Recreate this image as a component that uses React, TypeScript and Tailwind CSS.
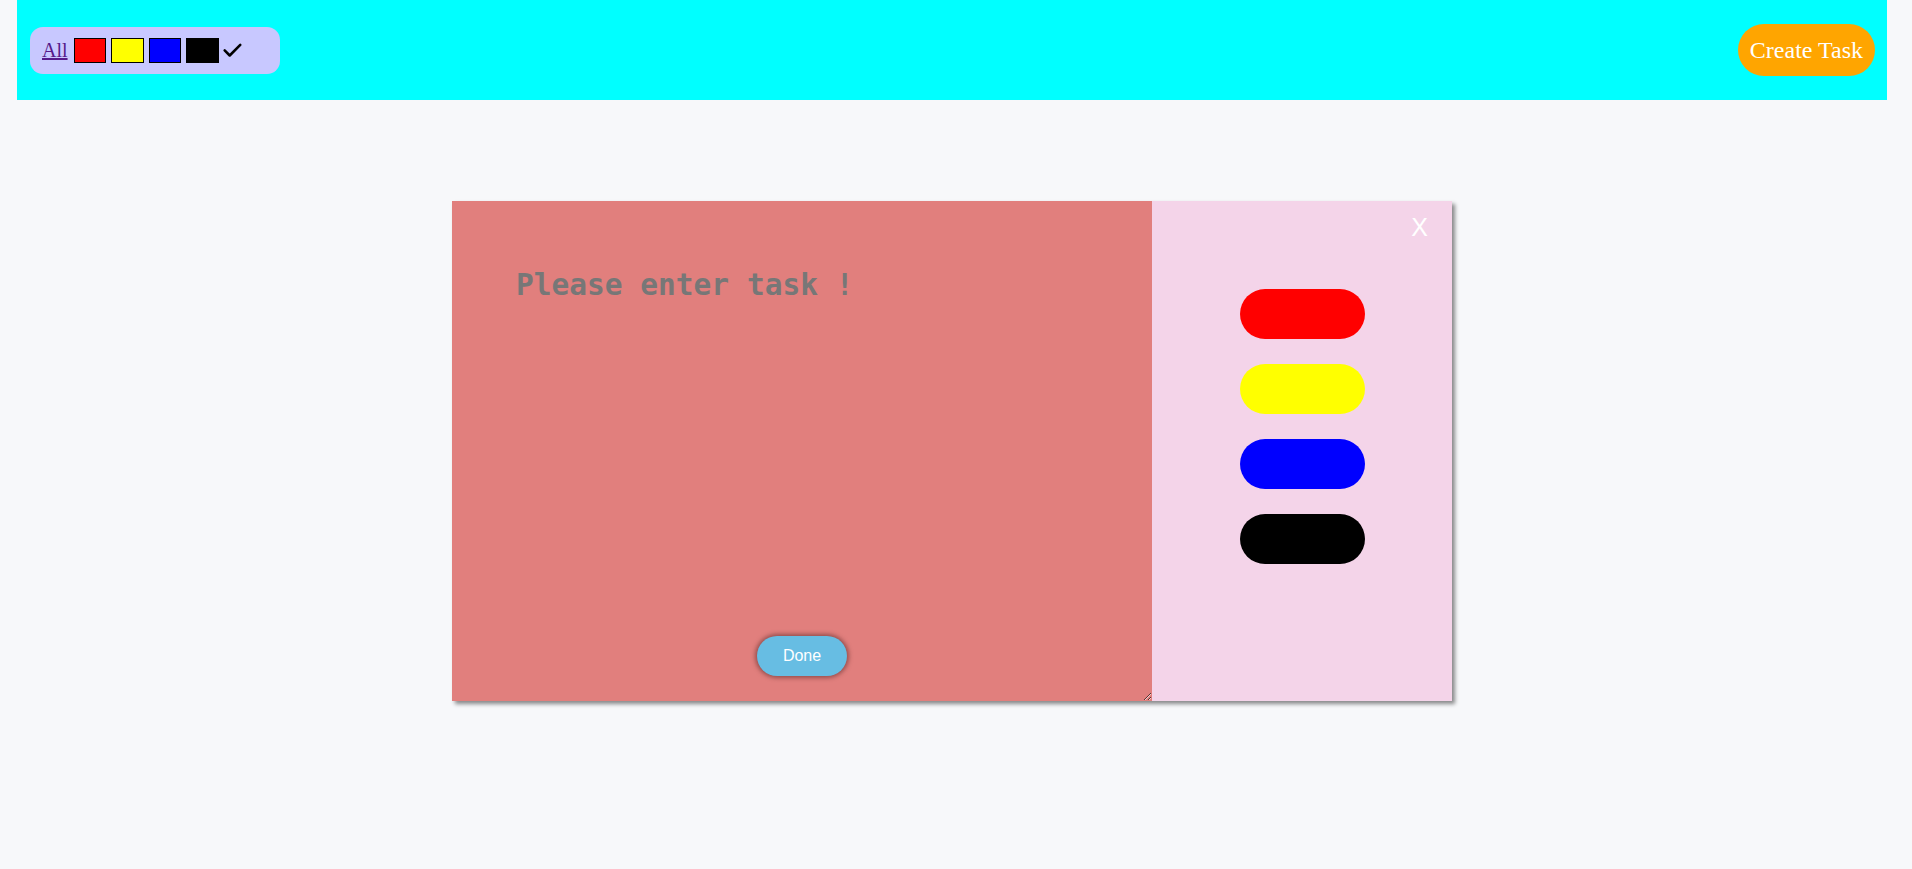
import React from "react";

export default function App() {
  return (
    <div className="min-h-[869px] w-full bg-[#f7f8fa]">
      <div className="pl-[17px]">
        <div className="flex h-[100px] w-[1870px] items-center justify-between bg-[#00ffff] pl-[13px] pr-[12px]">
          <div className="flex h-[47px] w-[250px] items-center gap-[5px] rounded-[13px] bg-[#c8c8ff] pl-[12px]">
            <a href="#" className="mr-[1px] text-[20px] leading-none text-[#551a8b] underline" style={{ fontFamily: '"Liberation Serif", serif' }}>
              All
            </a>
            <span className="h-[25px] w-[32px] border border-black bg-[#ff0000]" />
            <span className="h-[25px] w-[33px] border border-black bg-[#ffff00]" />
            <span className="h-[25px] w-[32px] border border-black bg-[#0000ff]" />
            <span className="h-[25px] w-[33px] border border-black bg-black" />
            <svg width="22" height="22" viewBox="0 0 24 24" fill="none" stroke="black" strokeWidth="2.8" strokeLinecap="round" strokeLinejoin="round" className="-ml-[3px]">
              <path d="M4 12.5l5.5 5.5L21 6.5" />
            </svg>
          </div>
          <button
            className="h-[52px] rounded-[26px] bg-[#ffa500] px-[12px] text-[24px] leading-none text-white"
            style={{ fontFamily: '"Liberation Serif", serif' }}
          >
            Create Task
          </button>
        </div>
      </div>
      <div className="ml-[452px] mt-[101px] flex h-[500px] w-[1000px] shadow-[3px_3px_4px_rgba(0,0,0,0.45)]">
        <div className="relative h-[500px] w-[700px] bg-[#e17f7d]">
          <textarea
            placeholder="Please enter task !"
            className="block h-[500px] w-[700px] resize bg-transparent px-[64px] pt-[62px] text-[29.5px] font-bold text-[#777] outline-none placeholder:text-[#777]"
            style={{ fontFamily: '"DejaVu Sans Mono", monospace' }}
          />
          <button
            className="absolute bottom-[25px] left-[305px] h-[40px] w-[90px] rounded-[20px] bg-[#67bde3] text-[16px] text-white shadow-[0_0_4px_2px_rgba(90,40,40,0.55)]"
            style={{ fontFamily: '"Liberation Sans", Arial, sans-serif' }}
          >
            Done
          </button>
        </div>
        <div className="relative flex h-[500px] w-[300px] flex-col items-center gap-[25px] bg-[#f4d4e9] pt-[88px]">
          <span
            className="absolute right-[24px] top-[14px] text-[25px] leading-none text-white"
            style={{ fontFamily: '"Liberation Sans", Arial, sans-serif' }}
          >
            X
          </span>
          <div className="h-[50px] w-[125px] rounded-[25px] bg-[#ff0000]" />
          <div className="h-[50px] w-[125px] rounded-[25px] bg-[#ffff00]" />
          <div className="h-[50px] w-[125px] rounded-[25px] bg-[#0000ff]" />
          <div className="h-[50px] w-[125px] rounded-[25px] bg-black" />
        </div>
      </div>
    </div>
  );
}
